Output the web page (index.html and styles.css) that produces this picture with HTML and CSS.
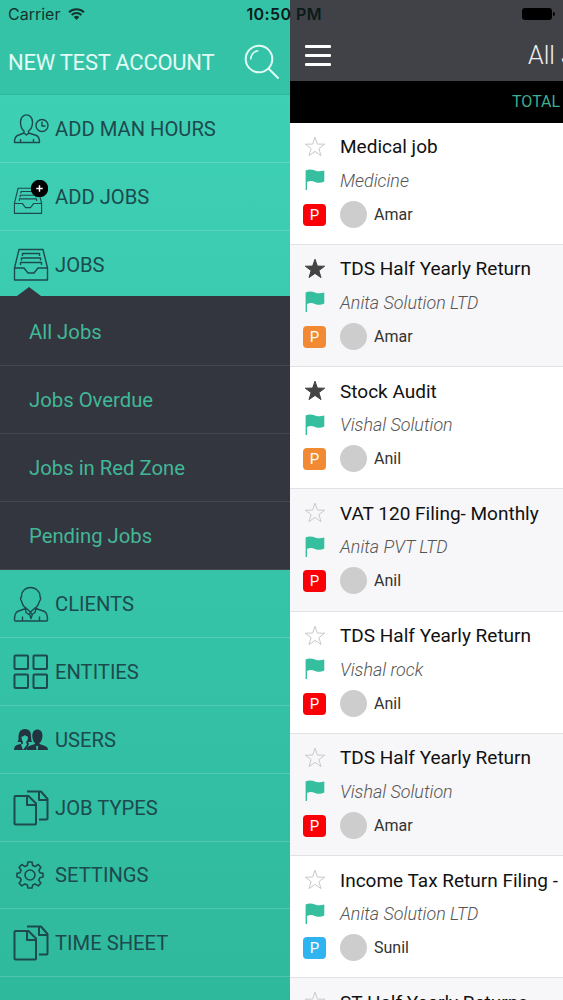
FILE: index.html
```
<!DOCTYPE html>
<html lang="en">
<head>
  <meta charset="UTF-8" />
  <meta name="viewport" content="width=device-width, initial-scale=1.0"/>
  <title>All Jobs</title>
  <link rel="stylesheet" href="styles.css">
</head>
<body>
  <!-- Shared icons -->
  <svg class="sprite" width="0" height="0">
    <symbol id="i-star" viewBox="0 0 22 22"><path d="M11 1.2l2.4 6.9 7.3.1-5.8 4.4 2.1 7-6-4.2-6 4.2 2.1-7L1.300 8.200l7.300-.1z"/></symbol>
    <symbol id="i-flag" viewBox="0 0 20 22"><path d="M.6 1.600C3.500-.2 7 .2 10 1.500c3 1.200 6 1 9.300.1v11c-3 1.500-6.500 1.500-9.300.300-3-1.200-5.500-1-8 .1v8H.6z"/></symbol>
    <symbol id="i-tray" viewBox="0 0 36 34"><path d="M6 1.500h24l4.500 18.500v12H1.500V20zM1.500 20h9.500l4 5h6l4-5h9.500M9.500 8V5.500h17V8M8.500 12.500V10h19v2.500M7.500 17v-2.500h21V17"/></symbol>
    <symbol id="i-files" viewBox="0 0 36 36"><path d="M3 6h12.500l7.500 7.500V33.500q0 1-1 1H2.500q-1 0-1-1V7q0-1 1-1zM14 6v9h9M14 1.500h14l6.500 7.500V28.500q0 1-1 1H26M26 1.500v8.500h8.500"/></symbol>
  </svg>

  <div class="status-bar">
    <span class="carrier">Carrier</span>
    <svg class="wifi" width="17" height="12" viewBox="0 0 17 12"><path d="M1 4.300a10.800 10.800 0 0 1 15 0M3.600 7a7 7 0 0 1 9.800 0" fill="none" stroke="#12362f" stroke-width="2"/><path d="M8.500 12L5.700 9.100a4 4 0 0 1 5.600 0z" fill="#12362f"/></svg>
    <span class="clock">10:50 PM</span>
    <span class="battery"></span>
  </div>

  <div class="app">
    <nav class="sidebar">
      <div class="account">
        <h1>NEW TEST ACCOUNT</h1>
        <svg width="36" height="36" viewBox="0 0 36 36" fill="none" stroke="#e2fbf5" stroke-width="2" stroke-linecap="round"><circle cx="15" cy="15" r="13.300"/><path d="M24.500 24.500L34 34"/><path d="M6.800 15a8.500 8.500 0 0 1 7-8.300" stroke-width="1.500"/></svg>
      </div>
      <div class="menu">
        <div class="item">
          <svg class="icon" width="36" height="30" viewBox="0 0 36 30"><path d="M7.500 8c0-9.500 12-9.500 12 0 0 4-1.500 7.500-4 9v2l8 2.500q3 1.500 3 7H1.500q0-5.500 3-7l6.500-2.500v-2c-2-1.500-3.500-5-3.500-9zM10.500 18.500l3 2.500 3-2.500M7.500 25v3M20.500 25v3"/><circle cx="29" cy="11.500" r="6"/><path d="M29 7.500V12h3.500"/></svg>
          <span>ADD MAN HOURS</span>
        </div>
        <div class="item">
          <span class="icon add-icon">
            <svg width="30" height="28" viewBox="0 0 36 34"><use href="#i-tray"/></svg>
            <svg class="plus" width="17" height="17" viewBox="0 0 17 17"><circle cx="8.500" cy="8.500" r="8"/><path d="M8.500 5.300v6.400M5.300 8.500h6.400"/></svg>
          </span>
          <span>ADD JOBS</span>
        </div>
        <div class="item open">
          <svg class="icon" width="36" height="34"><use href="#i-tray"/></svg>
          <span>JOBS</span>
        </div>
        <div class="submenu">
          <a>All Jobs</a>
          <a>Jobs Overdue</a>
          <a>Jobs in Red Zone</a>
          <a>Pending Jobs</a>
        </div>
        <div class="item">
          <svg class="icon" width="36" height="36" viewBox="0 0 36 36"><path d="M8.500 11C8 6 12 1.500 17.500 1.500S27.500 6 27 11c1 .5 1 2.500-.500 4-1 4-3 6.500-5 7.500L17.500 26l-4-3.500c-2-1-4-3.500-5-7.500-1.500-1.500-1-3.500 0-4zM12.500 22.500L4.500 25.500q-3 1.500-3 8.500 0 1 1 1h31q1 0 1-1 0-7-3-8.500l-8.500-3M12.500 22.500l.5 4 3 2 1.500-2.500 1.500 2.500 3-2 1-4M16.500 28L18 32.500 19.500 28M9.500 30.500v4.500M26.500 30.500v4.500"/></svg>
          <span>CLIENTS</span>
        </div>
        <div class="item">
          <svg class="icon bold" width="36" height="36" viewBox="0 0 36 36"><rect x="1.500" y="1.500" width="13.500" height="13.500" rx="1"/><rect x="20.500" y="1.500" width="13.500" height="13.500" rx="1"/><rect x="1.500" y="20.500" width="13.500" height="13.500" rx="1"/><rect x="20.500" y="20.500" width="13.500" height="13.500" rx="1"/></svg>
          <span>ENTITIES</span>
        </div>
        <div class="item">
          <svg class="icon solid" width="36" height="23" viewBox="0 0 36 23"><path d="M1 22q0-4 3-5l4-1.200V14H4.500Q6 12 5.500 8 6 1 12 1q6 0 6 7 0 4 1 6h-4l1 2-3 6z"/><path class="face" d="M8.500 8.500q2 .3 3.500-1.500 1 1.500 3 1.500c0 3-1 5-2 5.500l1 2.500-4 5.500L8 16.500l2-1V14C9 13 8.500 11 8.500 8.500z"/><path d="M19.300 7.500C19.300-.6 29.500-.6 29.500 7.500c0 3.500-1.500 6.500-3 7.500v1l5.500 2q3 1 3 4H13.500q0-3 2.500-4l6-2v-1c-1.500-1-2.700-4-2.700-7.500z"/><path class="face" d="M22.800 17.500l1.300 1 1.300-1-.8 4.500h-1z"/></svg>
          <span>USERS</span>
        </div>
        <div class="item">
          <svg class="icon bold" width="36" height="36"><use href="#i-files"/></svg>
          <span>JOB TYPES</span>
        </div>
        <div class="item">
          <svg class="icon gear" width="28" height="28" viewBox="0 0 28 28"><path d="M12 1h4l.7 3.600 2.300 1 3.200-2.100 2.700 2.700-2 3.100 1 2.400 3.100.7v3.600l-3.200.8-1 2.300 2.100 3.100-2.700 2.700-3.200-2-2.300 1L16 27h-4l-.7-3.100-2.300-1-3.200 2-2.700-2.700 2.100-3.100-1-2.300L1 16v-3.600l3.100-.7 1-2.400-2-3.100 2.700-2.700L9 5.600l2.300-1z"/><circle cx="14" cy="14" r="5"/></svg>
          <span>SETTINGS</span>
        </div>
        <div class="item">
          <svg class="icon bold" width="36" height="36"><use href="#i-files"/></svg>
          <span>TIME SHEET</span>
        </div>
      </div>
    </nav>

    <main class="content">
      <div class="topbar">
        <div class="burger"><i></i><i></i><i></i></div>
        <h2>All Jobs</h2>
      </div>
      <div class="total">TOTAL</div>
      <div class="jobs">
        <div class="job">
          <svg class="star"><use href="#i-star"/></svg><div class="title">Medical job</div>
          <svg class="flag"><use href="#i-flag"/></svg><div class="client">Medicine</div>
          <span class="tag red">P</span><div class="user"><i></i>Amar</div>
        </div>
        <div class="job">
          <svg class="star on"><use href="#i-star"/></svg><div class="title">TDS Half Yearly Return</div>
          <svg class="flag"><use href="#i-flag"/></svg><div class="client">Anita Solution LTD</div>
          <span class="tag orange">P</span><div class="user"><i></i>Amar</div>
        </div>
        <div class="job">
          <svg class="star on"><use href="#i-star"/></svg><div class="title">Stock Audit</div>
          <svg class="flag"><use href="#i-flag"/></svg><div class="client">Vishal Solution</div>
          <span class="tag orange">P</span><div class="user"><i></i>Anil</div>
        </div>
        <div class="job">
          <svg class="star"><use href="#i-star"/></svg><div class="title">VAT 120 Filing- Monthly</div>
          <svg class="flag"><use href="#i-flag"/></svg><div class="client">Anita PVT LTD</div>
          <span class="tag red">P</span><div class="user"><i></i>Anil</div>
        </div>
        <div class="job">
          <svg class="star"><use href="#i-star"/></svg><div class="title">TDS Half Yearly Return</div>
          <svg class="flag"><use href="#i-flag"/></svg><div class="client">Vishal rock</div>
          <span class="tag red">P</span><div class="user"><i></i>Anil</div>
        </div>
        <div class="job">
          <svg class="star"><use href="#i-star"/></svg><div class="title">TDS Half Yearly Return</div>
          <svg class="flag"><use href="#i-flag"/></svg><div class="client">Vishal Solution</div>
          <span class="tag red">P</span><div class="user"><i></i>Amar</div>
        </div>
        <div class="job">
          <svg class="star"><use href="#i-star"/></svg><div class="title">Income Tax Return Filing -</div>
          <svg class="flag"><use href="#i-flag"/></svg><div class="client">Anita Solution LTD</div>
          <span class="tag blue">P</span><div class="user"><i></i>Sunil</div>
        </div>
        <div class="job">
          <svg class="star"><use href="#i-star"/></svg><div class="title">ST Half Yearly Returns</div>
        </div>
      </div>
    </main>
  </div>
</body>
</html>
```
FILE: styles.css
```
* {
  box-sizing: border-box;
}
body {
  margin: 0;
  height: 1000px;
  overflow: hidden;
  position: relative;
  font-family: Roboto, Arial, sans-serif;
}
.sprite {
  position: absolute;
}
.app {
  display: flex;
  height: 1000px;
}

/* Status bar floats over both panels */
.status-bar {
  position: absolute;
  top: 0;
  left: 0;
  width: 563px;
  height: 28px;
  padding-left: 8px;
  display: flex;
  align-items: center;
  font-family: Inter, Arial, sans-serif;
  font-size: 16px;
  color: #12362f;
  z-index: 2;
}
.wifi {
  margin-left: 8px;
}
.clock {
  margin-left: 161px;
  font-weight: 600;
  letter-spacing: 0.4px;
  color: #0b1a1a;
}
.battery {
  position: relative;
  width: 30px;
  height: 12px;
  margin-left: auto;
  margin-right: 11px;
  background: #000;
  border-radius: 3px;
}
.battery::after {
  content: "";
  position: absolute;
  right: -3px;
  top: 4px;
  width: 2px;
  height: 4px;
  background: #000;
  border-radius: 0 2px 2px 0;
}

/* Sidebar */
.sidebar {
  width: 290px;
  flex: none;
  display: flex;
  flex-direction: column;
  background: #34c3a7;
}
.account {
  height: 95px;
  padding: 30px 10px 0 8px;
  display: flex;
  align-items: center;
  justify-content: space-between;
  border-bottom: 1px solid #30b99e;
}
.account h1 {
  margin: 0;
  font-size: 22px;
  font-weight: 400;
  letter-spacing: -0.25px;
  color: #e2fbf5;
  white-space: nowrap;
}
.menu {
  flex: 1;
  background: linear-gradient(#3ed0b5, #36c5aa 50%, #2fb99c);
}
.item {
  height: 67.9px;
  padding-top: 1px;
  padding-left: 13px;
  display: flex;
  align-items: center;
  border-bottom: 1px solid rgba(255, 255, 255, 0.17);
  font-size: 20.2px;
  color: #1d4a4d;
}
.item.open {
  position: relative;
  height: 65.3px;
  padding-top: 3px;
  border-bottom: none;
}
.item.open::after {
  content: "";
  position: absolute;
  left: 17px;
  bottom: 0;
  border: 12px solid transparent;
  border-top: none;
  border-bottom: 9px solid #33363f;
}
.icon {
  flex: none;
  margin-right: 6px;
  fill: none;
  stroke: #1d4a4d;
  stroke-width: 1.4;
  stroke-linejoin: round;
}
.icon.bold {
  stroke-width: 2;
}
.icon.solid {
  fill: #22343f;
  stroke: none;
}
.icon .face {
  fill: #35c4a9;
}
.icon.gear {
  margin: 0 11px 0 3px;
  stroke-width: 1.6;
}
.add-icon {
  position: relative;
  width: 36px;
  height: 34px;
  padding-top: 7px;
}
.plus {
  position: absolute;
  top: 0;
  right: 1px;
  fill: #000;
  stroke: #000;
}
.plus path {
  stroke: #fff;
}
.submenu {
  background: #33363f;
  padding-top: 2.300px;
}
.submenu a {
  display: flex;
  align-items: center;
  height: 67.9px;
  padding-top: 1px;
  padding-left: 29px;
  border-bottom: 1px solid #45474c;
  font-size: 20.300px;
  color: #42b797;
}

/* Job list */
.content {
  flex: 1;
  min-width: 0;
  display: flex;
  flex-direction: column;
  overflow: hidden;
  background: #fff;
}
.topbar {
  height: 81px;
  flex: none;
  padding: 30px 0 0 15px;
  display: flex;
  align-items: center;
  background: #414247;
}
.burger {
  width: 26px;
  flex: none;
  display: grid;
  gap: 6.500px;
}
.burger i {
  height: 2.500px;
  background: #fff;
  border-radius: 1px;
}
.topbar h2 {
  margin: 0 0 0 197px;
  font-size: 25px;
  font-weight: 300;
  color: #f0f0f0;
  white-space: nowrap;
}
.total {
  height: 41.500px;
  flex: none;
  padding-left: 222px;
  line-height: 41px;
  background: #000;
  color: #3fae8f;
  font-size: 16px;
  white-space: nowrap;
}
.job {
  height: 122.25px;
  padding: 7px 0 0 13px;
  display: grid;
  grid-template-columns: 37px 1fr;
  grid-template-rows: 34px 33px 35px;
  align-items: center;
  border-bottom: 1px solid #e2e2e4;
  white-space: nowrap;
}
.job:nth-child(even) {
  background: #f7f7f9;
}
.star {
  width: 22px;
  height: 22px;
  margin-left: 1px;
  fill: none;
  stroke: #c9c9c9;
}
.star.on {
  fill: #444;
  stroke: #444;
}
.flag {
  width: 20px;
  height: 22px;
  margin-left: 2px;
  fill: #36bf9f;
}
.title {
  font-size: 19px;
  color: #111;
}
.client {
  font-size: 17.900px;
  font-weight: 300;
  font-style: italic;
  color: #555;
}
.tag {
  width: 23px;
  height: 22px;
  margin-top: 1px;
  border-radius: 4px;
  line-height: 22px;
  text-align: center;
  font-size: 15px;
  color: #fff;
}
.red {
  background: #fb0007;
}
.orange {
  background: #f18a32;
}
.blue {
  background: #30b4f0;
}
.user {
  display: flex;
  align-items: center;
  font-size: 16px;
  color: #333;
}
.user i {
  width: 27px;
  height: 27px;
  margin-right: 7px;
  border-radius: 50%;
  background: #cdcdcd;
}
```
